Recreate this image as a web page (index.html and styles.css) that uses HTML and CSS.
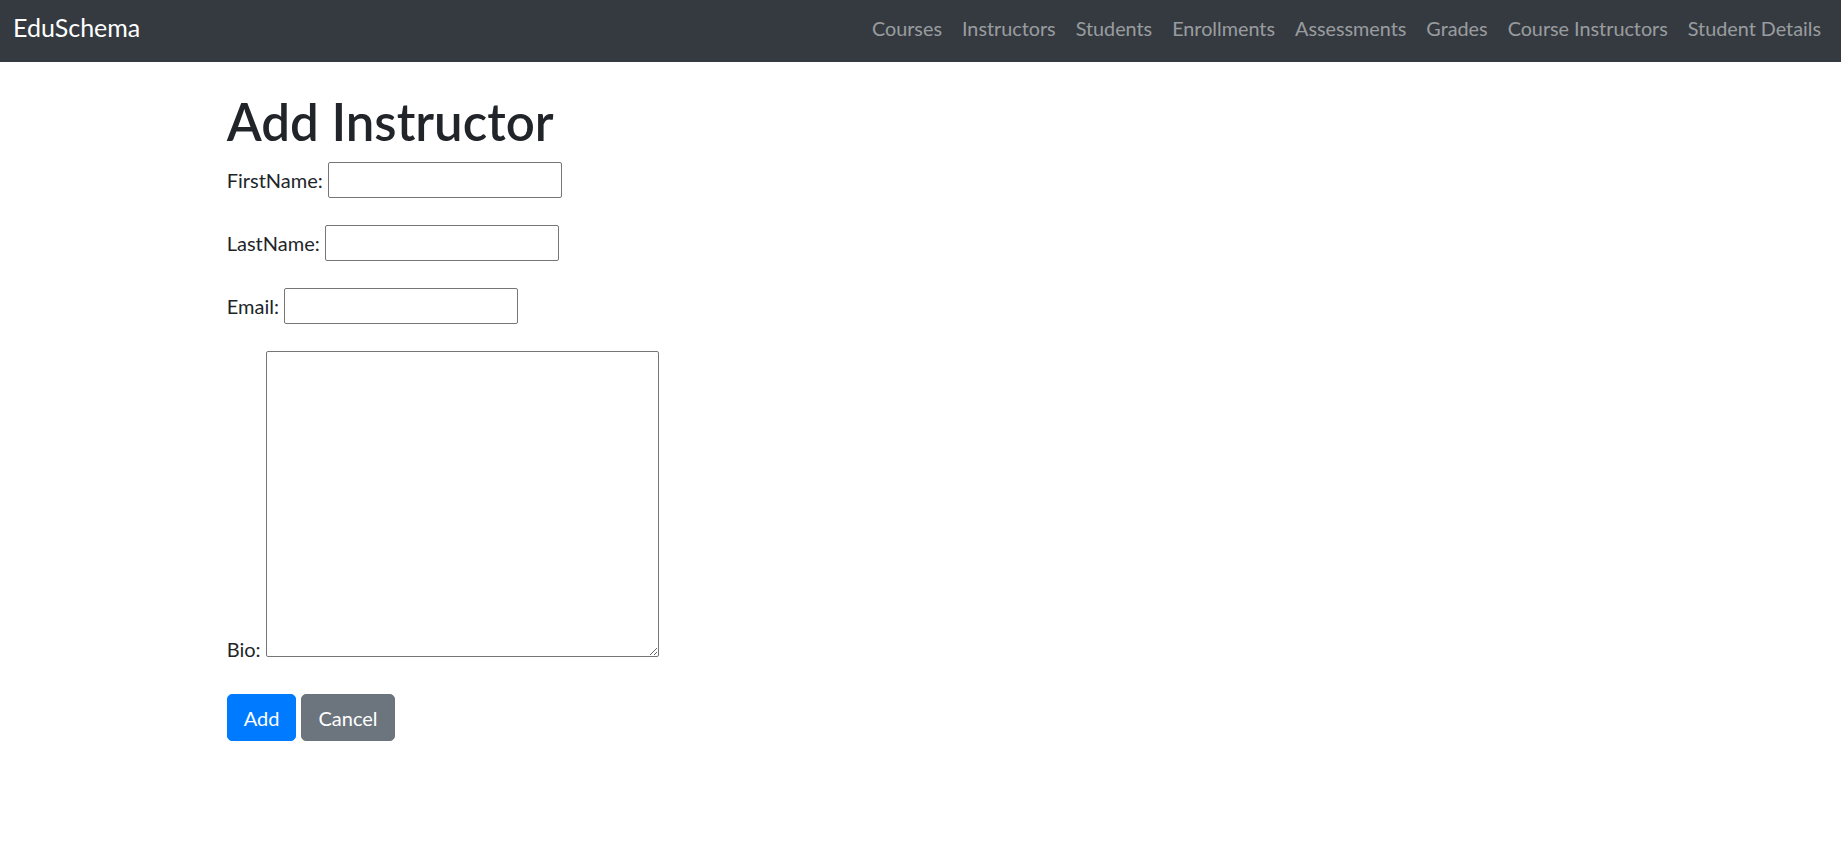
FILE: index.html
```html
<!DOCTYPE html>
<html lang="en">
<head>
<meta charset="utf-8">
<title>EduSchema - Add Instructor</title>
<link rel="stylesheet" href="styles.css">
</head>
<body>
<nav class="navbar">
  <a class="brand" href="#">EduSchema</a>
  <ul class="nav-links">
    <li><a href="#">Courses</a></li>
    <li><a href="#">Instructors</a></li>
    <li><a href="#">Students</a></li>
    <li><a href="#">Enrollments</a></li>
    <li><a href="#">Assessments</a></li>
    <li><a href="#">Grades</a></li>
    <li><a href="#">Course Instructors</a></li>
    <li><a href="#">Student Details</a></li>
  </ul>
</nav>
<main class="container">
  <h1 class="title">Add Instructor</h1>
  <form class="form">
    <div class="field">
      <label for="fn">FirstName:</label>
      <input id="fn" type="text">
    </div>
    <div class="field">
      <label for="ln">LastName:</label>
      <input id="ln" type="text">
    </div>
    <div class="field">
      <label for="em">Email:</label>
      <input id="em" type="email">
    </div>
    <div class="field-bio">
      <label for="bio">Bio:</label> <textarea id="bio"></textarea>
    </div>
    <div class="actions">
      <button type="submit" class="btn btn-primary">Add</button>
      <button type="button" class="btn btn-secondary">Cancel</button>
    </div>
  </form>
</main>
</body>
</html>
```
FILE: styles.css
```css
* { box-sizing: border-box; }
html, body { margin: 0; padding: 0; }
body {
  font-family: Lato, "Open Sans", "Liberation Sans", sans-serif;
  font-size: 20px;
  line-height: 30px;
  color: #212529;
  background: #fff;
}
.navbar {
  height: 62px;
  background: #343a40;
  display: flex;
  justify-content: space-between;
  align-items: flex-start;
  padding: 0 10px 0 13px;
}
.brand {
  color: #fff;
  text-decoration: none;
  font-size: 25px;
  line-height: 30px;
  padding-top: 12px;
}
.nav-links {
  list-style: none;
  margin: 0;
  padding: 0;
  display: flex;
  padding-top: 12.5px;
}
.nav-links a {
  display: block;
  padding: 0 10px;
  color: rgba(255,255,255,.5);
  text-decoration: none;
  font-size: 19.8px;
  line-height: 30px;
}
.container {
  max-width: 1425px;
  margin: 0 auto;
  padding: 0 18.75px;
}
.title {
  margin: 30px 0 10px;
  font-size: 51px;
  line-height: 60px;
  font-weight: 600;
}
.field {
  display: flex;
  align-items: baseline;
  gap: 5px;
  margin-bottom: 27px;
}
.field input {
  width: 234px;
  height: 36px;
  font: inherit;
  line-height: 30px;
  padding: 1px 2px;
  border: 1px solid #767676;
  border-radius: 2px;
  margin: 0;
}
.field-bio {
  margin-bottom: 30px;
}
.field-bio textarea {
  width: 393px;
  height: 306px;
  font: inherit;
  padding: 1px 2px;
  border: 1px solid #767676;
  border-radius: 2px;
  margin: 0;
  vertical-align: baseline;
  resize: both;
}
.actions {
  display: flex;
  gap: 5px;
}
.btn {
  font: inherit;
  line-height: 30px;
  padding: 7.5px 16px;
  border: 1px solid transparent;
  border-radius: 5px;
  color: #fff;
  cursor: pointer;
}
.btn-primary { background: #007bff; border-color: #007bff; }
.btn-secondary { background: #6c757d; border-color: #6c757d; }
```
